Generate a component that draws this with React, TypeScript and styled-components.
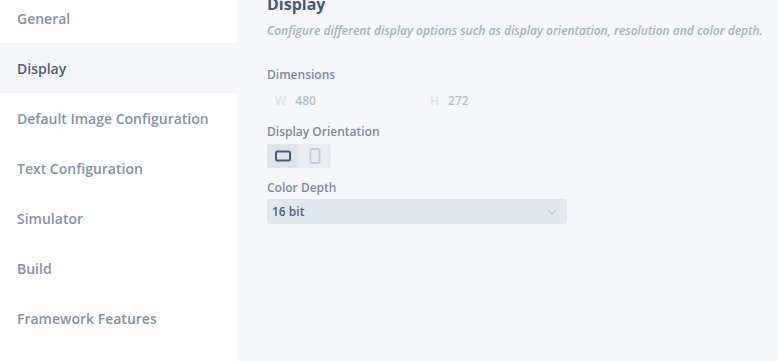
import React from 'react';
import styled, {createGlobalStyle} from 'styled-components';

const GlobalStyle = createGlobalStyle`
    html, body {
        margin: 0;
        padding: 0;
        height: 100%;
        overflow: hidden;
    }

    body {
        font-family: 'Open Sans', 'Noto Sans', sans-serif;
        background: #f5f7fa;
    }
`;

const Layout = styled.div`
    display: flex;
    width: 778px;
    height: 361px;
    overflow: hidden;
`;

const Sidebar = styled.nav`
    width: 237px;
    flex-shrink: 0;
    background: #fff;
    display: flex;
    flex-direction: column;
`;

const NavList = styled.ul`
    list-style: none;
    margin: -7px 0 0;
    padding: 0;
`;

const NavItem = styled.li<{$active?: boolean}>`
    height: 50px;
    display: flex;
    align-items: center;
    padding-left: 17px;
    font-size: 14px;
    font-weight: 600;
    color: ${(p) => (p.$active ? '#4a5f7e' : '#8193ac')};
    background: ${(p) => (p.$active ? '#f4f6f9' : 'transparent')};
`;

const Main = styled.main`
    flex: 1;
    min-width: 0;
    padding: 0 12px 0 30px;
    margin-top: -8px;
    display: flex;
    flex-direction: column;
`;

const Title = styled.h1`
    margin: 0;
    font-size: 16px;
    font-weight: 700;
    color: #445a7a;
    line-height: 24px;
`;

const Subtitle = styled.p`
    margin: 7px 0 0;
    font-size: 12px;
    font-style: italic;
    font-weight: 600;
    color: #a5b1c2;
    line-height: 16px;
    white-space: nowrap;
`;

const Field = styled.div<{$top: number}>`
    margin-top: ${(p) => p.$top}px;
    display: flex;
    flex-direction: column;
`;

const Label = styled.label`
    font-size: 12px;
    font-weight: 600;
    color: #7a8ba4;
    line-height: 16px;
`;

const DimensionRow = styled.div`
    display: flex;
    margin-top: 9px;
    height: 16px;
    align-items: center;
`;

const Dimension = styled.div`
    width: 155px;
    box-sizing: border-box;
    display: flex;
    align-items: center;
    gap: 9px;
    padding-left: 8px;
    font-size: 12px;
    font-weight: 600;
`;

const DimKey = styled.span`
    color: #dce2ea;
`;

const DimValue = styled.span`
    color: #b3bfce;
`;

const ToggleGroup = styled.div`
    margin-top: 4px;
    display: flex;
    align-self: flex-start;
    background: #e8ecf1;
    border-radius: 3px;
    overflow: hidden;
`;

const ToggleButton = styled.button<{$active?: boolean}>`
    appearance: none;
    border: 0;
    padding: 0;
    width: 32px;
    height: 24px;
    display: flex;
    align-items: center;
    justify-content: center;
    background: ${(p) => (p.$active ? '#dfe4eb' : 'transparent')};
    color: ${(p) => (p.$active ? '#435a7b' : '#c3ccd8')};
`;

const Select = styled.div`
    margin-top: 3px;
    width: 300px;
    height: 25px;
    box-sizing: border-box;
    border-radius: 3px;
    background: #e2e7ed;
    display: flex;
    align-items: center;
    justify-content: space-between;
    padding: 0 10px 0 5px;
    font-size: 12px;
    font-weight: 600;
    color: #4a5f7e;
`;

const LandscapeIcon = () => (
    <svg width='16' height='12' viewBox='0 0 16 12'>
        <rect x='1' y='1.5' width='14' height='9' rx='1.5' fill='none' stroke='currentColor' strokeWidth='2' />
    </svg>
);

const PortraitIcon = () => (
    <svg width='12' height='16' viewBox='0 0 12 16'>
        <rect x='1.5' y='1' width='9' height='14' rx='1.5' fill='none' stroke='currentColor' strokeWidth='2' />
    </svg>
);

const Chevron = () => (
    <svg width='10' height='6' viewBox='0 0 10 6'>
        <path d='M1 1l4 4 4-4' fill='none' stroke='#c7cfda' strokeWidth='1.5' />
    </svg>
);

const navItems = [
    'General',
    'Display',
    'Default Image Configuration',
    'Text Configuration',
    'Simulator',
    'Build',
    'Framework Features'
];

const App = () => (
    <>
        <GlobalStyle />
        <Layout>
            <Sidebar>
                <NavList>
                    {navItems.map((item) => (
                        <NavItem key={item} $active={item === 'Display'}>
                            {item}
                        </NavItem>
                    ))}
                </NavList>
            </Sidebar>
            <Main>
                <Title>Display</Title>
                <Subtitle>
                    Configure different display options such as display orientation, resolution and color depth.
                </Subtitle>

                <Field $top={28}>
                    <Label>Dimensions</Label>
                    <DimensionRow>
                        <Dimension>
                            <DimKey>W</DimKey>
                            <DimValue>480</DimValue>
                        </Dimension>
                        <Dimension>
                            <DimKey>H</DimKey>
                            <DimValue>272</DimValue>
                        </Dimension>
                    </DimensionRow>
                </Field>

                <Field $top={16}>
                    <Label>Display Orientation</Label>
                    <ToggleGroup>
                        <ToggleButton $active type='button'>
                            <LandscapeIcon />
                        </ToggleButton>
                        <ToggleButton type='button'>
                            <PortraitIcon />
                        </ToggleButton>
                    </ToggleGroup>
                </Field>

                <Field $top={12}>
                    <Label>Color Depth</Label>
                    <Select>
                        <span>16 bit</span>
                        <Chevron />
                    </Select>
                </Field>
            </Main>
        </Layout>
    </>
);

export default App;
